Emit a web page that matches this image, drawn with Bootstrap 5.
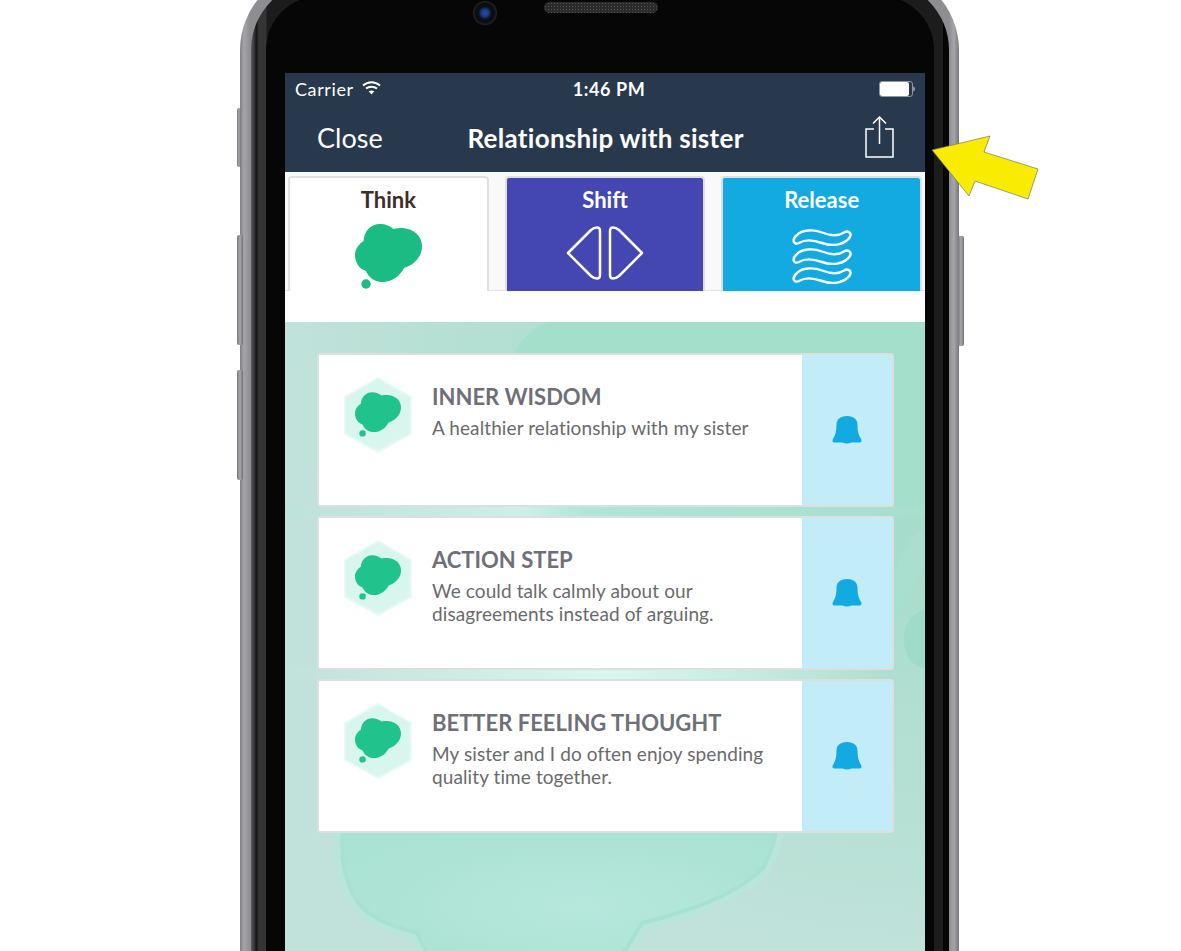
<!DOCTYPE html>
<html lang="en">
<head>
  <meta charset="UTF-8" />
  <title>Relationship with sister</title>
  <link rel="stylesheet" href="https://cdn.jsdelivr.net/npm/bootstrap@5.3.0/dist/css/bootstrap.min.css" />
  <style>
    html, body { height: 951px; overflow: hidden; background: #fff; }
    body { font-family: "Lato", "Liberation Sans", sans-serif; position: relative; }

    /* phone frame */
    .phone-shell {
      width: 719px; height: 981px; margin: -30px 0 0 240px; padding: 11px 10px 0 11px;
      border-radius: 80px 80px 0 0;
      background: linear-gradient(90deg, #7f7f85 0, #a5a5a9 4px, #8e8e92 10px, #8e8e92 calc(100% - 10px), #a6a6aa calc(100% - 5px), #77777c 100%);
    }
    .phone-rim {
      height: 100%; padding: 15px 15px 0 15px; border-radius: 69px 69px 0 0;
      background: linear-gradient(90deg, #5e5e62 0, #101010 6px, #343434 7px, #343434 15px, #1c1c1c 16px, #1c1c1c calc(100% - 6px), #060606 calc(100% - 6px));
    }
    .phone-bezel { height: 100%; padding: 0 9px 0 19px; border-radius: 54px 54px 0 0; background: #060606; }
    .bezel-top { height: 77px; padding-top: 5px; padding-left: 188px; }
    .cam { width: 24px; height: 24px; border-radius: 50%; background: radial-gradient(circle at 50% 50%, #1d4fa8 0, #173a80 22%, #0b0f1c 38%, #0c0c0f 55%, #55565a 100%); }
    .speaker {
      width: 114px; height: 11px; margin-left: 47px; border-radius: 6px; margin-top: 1px;
      background-color: #2b2b2b; background-image: radial-gradient(#505052 35%, transparent 45%); background-size: 3px 3px;
    }
    .side-key { position: absolute; background: linear-gradient(90deg, #77777c, #a9a9ad 50%, #6f6f74); border-radius: 2px; }
    .key-a { left: 237px; top: 108px; width: 4px; height: 59px; }
    .key-b { left: 237px; top: 235px; width: 6px; height: 110px; }
    .key-c { left: 237px; top: 370px; width: 6px; height: 110px; }
    .key-d { left: 958px; top: 236px; width: 6px; height: 110px; }
    .note-arrow { position: absolute; left: 925px; top: 130px; }

    /* header */
    .screen { width: 640px; background: #fff; }
    .app-head { height: 99px; background: #28394d; color: #fff; }
    .status-row { height: 32px; padding: 0 10px; font-size: 18px; letter-spacing: .6px; }
    .status-row > div { flex: 1 1 0; }
    .title-row { height: 67px; padding: 0 31px 0 32px; }
    .title-row > .head-side { flex: 1 1 0; }
    .close-txt { font-size: 27px; font-weight: 400; }
    .title-txt { font-size: 26px; font-weight: 700; letter-spacing: .3px; }

    /* tabs */
    .tab-strip { height: 119px; background: #f9f9f9; border-bottom: 1px solid #e2e2e2; padding: 4px 3px 0 3px; gap: 16px; }
    .tab-item { flex: 1 1 0; margin-bottom: -1px; border: 2px solid #e0e0e0; border-bottom: 0; border-radius: 4px 4px 0 0; text-align: center; color: #fff; font-size: 22px; font-weight: 700; line-height: 1; padding-top: 11px; }
    .tab-think { background: #fff; color: #3b2e28; }
    .tab-shift { background: #4447b1; }
    .tab-release { background: #13a9e1; }
    .tab-item svg { display: block; margin: 0 auto; }
    .tab-think svg { margin-top: 13px; }
    .tab-shift svg { margin-top: 15px; }
    .tab-release svg { margin-top: 18px; }
    .tab-gap { height: 31px; }

    /* content */
    .pane { position: relative; overflow: hidden; padding: 31px 31px 0 32px; background: radial-gradient(circle at 100% 0, #9fdac7 0, #a8ddcc 250px, #c0e2da 640px); }
    .pane-art { position: absolute; left: 0; top: 0; }
    .note-card { position: relative; height: 154px; border: 2px solid #dcdfde; border-radius: 3px; margin-bottom: 9px; background: #fff; }
    .note-main { flex: 1 1 auto; padding: 22px 0 0 25px; }
    .note-main .txt { margin-left: 20px; margin-top: 6px; }
    .note-title { font-size: 22px; font-weight: 700; color: #6f7077; line-height: 27px; margin-bottom: 6px; }
    .note-body { font-size: 19px; color: #6a6a6c; line-height: 23px; letter-spacing: .1px; }
    .note-side { width: 90px; background: #c3ecf9; }
  </style>
</head>
<body>
  <svg width="0" height="0" class="position-absolute">
    <symbol id="thought" viewBox="0 0 67 65">
      <path d="M8.500 17C9 7 16 0 25 0C31 0 35 2 38.500 5C41 4 44 4 48 4C59 5 67 12 67 22C67 33 59 41 49 44C45 52 37 58 27 58C20 58 14 54 11 47C4 45 0 38 0 31C0 25 4 20 8.500 17Z" />
      <circle cx="11" cy="60" r="4.700" />
    </symbol>
    <symbol id="bell" viewBox="0 0 30 30">
      <path d="M15 1C22 1 25.500 4.500 25.500 10C25.500 16 26.500 20 28.800 23.500C30.300 26 29.500 27.500 27 27.500H19.500Q15 29.500 10.500 27.500H3C.5 27.500 -.3 26 1.200 23.500C3.500 20 4.500 16 4.500 10C4.500 4.500 8 1 15 1Z" />
    </symbol>
    <symbol id="wave" viewBox="0 0 60 18">
      <path d="M5 6C10 1 21 0 30 3.500S46 7.500 52 3.500C56 1 60 4 58 8C53 15.500 41 18 30 14S12 11 7 14C2 16.500 -1 11 5 6Z" />
    </symbol>
    <linearGradient id="bandA" x1="0" x2="1" y1="0" y2="0">
      <stop offset="0" stop-color="#bde3d9" />
      <stop offset=".38" stop-color="#caf0e7" />
      <stop offset=".47" stop-color="#aee6d7" />
      <stop offset="1" stop-color="#a6dfcd" />
    </linearGradient>
    <linearGradient id="bandB" x1="0" x2="1" y1="0" y2="0">
      <stop offset="0" stop-color="#d9f7ef" stop-opacity="0" />
      <stop offset=".5" stop-color="#d9f7ef" />
      <stop offset=".95" stop-color="#d9f7ef" stop-opacity="0" />
    </linearGradient>
    <radialGradient id="bigLobe" cx=".55" cy=".6" r=".6">
      <stop offset="0" stop-color="#b6e8dc" />
      <stop offset="1" stop-color="#aae2d3" />
    </radialGradient>
  </svg>

  <div class="side-key key-a"></div>
  <div class="side-key key-b"></div>
  <div class="side-key key-c"></div>
  <div class="side-key key-d"></div>

  <div class="phone-shell">
    <div class="phone-rim">
      <div class="phone-bezel d-flex flex-column">
        <div class="bezel-top d-flex flex-shrink-0">
          <div class="cam"></div>
          <div class="speaker"></div>
        </div>
        <div class="screen d-flex flex-column flex-grow-1">

          <div class="app-head flex-shrink-0">
            <div class="status-row d-flex align-items-center">
              <div class="d-flex align-items-center">
                <span>Carrier</span>
                <svg width="19" height="15" viewBox="0 0 19 15" fill="none" stroke="#fff" stroke-width="2" class="ms-2 mb-1">
                  <path d="M1 5.500C6 1 13 1 18 5.500" />
                  <path d="M4 8.500C7 6 12 6 15 8.500" />
                  <path d="M9.500 14.500L6.700 11.300C8.300 10.200 10.700 10.200 12.300 11.300Z" fill="#fff" stroke="none" />
                </svg>
              </div>
              <div class="text-center fw-bold ps-2">1:46 PM</div>
              <div class="d-flex justify-content-end align-items-center">
                <svg width="36" height="16" viewBox="0 0 36 16">
                  <rect x=".5" y=".5" width="33" height="15" rx="2.500" fill="none" stroke="#8a97a6" />
                  <rect x="1" y="1" width="29" height="14" rx="2" fill="#fff" />
                  <path d="M34.500 5.500C36 6 36 10 34.500 10.500Z" fill="#dfe3e8" />
                </svg>
              </div>
            </div>
            <nav class="title-row d-flex align-items-center">
              <div class="head-side"><span class="close-txt">Close</span></div>
              <span class="title-txt">Relationship with sister</span>
              <div class="head-side d-flex justify-content-end">
                <svg width="29" height="42" viewBox="0 0 29 42" fill="none" stroke="#fff" stroke-width="1.500" class="mb-1">
                  <path d="M9 13H1V41H28V13H20" />
                  <path d="M14.500 28V1M8 7.500L14.500 1L21 7.500" />
                </svg>
              </div>
            </nav>
          </div>

          <div class="tab-strip d-flex flex-shrink-0">
            <div class="tab-item tab-think">
              Think
              <svg width="67" height="65" fill="#1abc84"><use href="#thought" /></svg>
            </div>
            <div class="tab-item tab-shift">
              Shift
              <svg width="78" height="54" viewBox="0 0 78 54" fill="none" stroke="#fff" stroke-width="2.500" stroke-linejoin="round">
                <path d="M2 27L25 4Q28 1.500 31 1.500Q34 1.500 34 5V49Q34 52.500 31 52.500Q28 52.500 25 50Z" />
                <path d="M76 27L53 4Q50 1.500 47 1.500Q44 1.500 44 5V49Q44 52.500 47 52.500Q50 52.500 53 50Z" />
              </svg>
            </div>
            <div class="tab-item tab-release">
              Release
              <svg width="60" height="56" viewBox="0 0 60 56" fill="none" stroke="#fff" stroke-width="2.400">
                <use href="#wave" width="60" height="18" />
                <use href="#wave" y="19" width="60" height="18" />
                <use href="#wave" y="38" width="60" height="18" />
              </svg>
            </div>
          </div>
          <div class="tab-gap flex-shrink-0"></div>

          <div class="pane flex-grow-1">
            <svg class="pane-art" width="640" height="630" viewBox="0 0 640 630">
              <!-- faint shapes behind the cards -->
              <path d="M228 35C235 15 250 5 265 0H640V190H228Z" fill="#a4dfcc" />
              <rect x="0" y="184" width="640" height="11" fill="url(#bandA)" />
              <rect x="0" y="347" width="640" height="11" fill="url(#bandB)" />
              <path d="M640 205C625 215 615 235 609 250V300C620 275 630 255 640 245Z" fill="#a8dfce" />
              <path d="M640 288C612 292 612 342 640 347Z" fill="#9edcc9" />
              <path d="M60 500C55 520 55 550 71 578C85 598 110 605 132 611L146 640H333L357 601C400 590 450 575 479 545C490 520 492 510 490 500Z" fill="#b8e6db" stroke="#b8e6db" stroke-width="16" stroke-linejoin="round" />
              <path d="M60 500C55 520 55 550 71 578C85 598 110 605 132 611L146 640H333L357 601C400 590 450 575 479 545C490 520 492 510 490 500Z" fill="url(#bigLobe)" stroke="#a7e2d1" stroke-width="4" stroke-linejoin="round" />
            </svg>

            <div class="note-card d-flex">
              <div class="note-main d-flex">
                <svg width="68" height="76" viewBox="0 0 68 76" class="flex-shrink-0">
                  <path d="M34 1L67 20V57L34 75L1 57V20Z" fill="#d8f6ee" stroke="#e8faf5" stroke-width="2" />
                  <svg x="11" y="15" width="46" height="45" fill="#20c38c"><use href="#thought" /></svg>
                </svg>
                <div class="txt">
                  <div class="note-title">INNER WISDOM</div>
                  <div class="note-body">A healthier relationship with my sister</div>
                </div>
              </div>
              <div class="note-side d-flex align-items-center justify-content-center">
                <svg width="30" height="30" fill="#13a9e1"><use href="#bell" /></svg>
              </div>
            </div>

            <div class="note-card d-flex">
              <div class="note-main d-flex">
                <svg width="68" height="76" viewBox="0 0 68 76" class="flex-shrink-0">
                  <path d="M34 1L67 20V57L34 75L1 57V20Z" fill="#d8f6ee" stroke="#e8faf5" stroke-width="2" />
                  <svg x="11" y="15" width="46" height="45" fill="#20c38c"><use href="#thought" /></svg>
                </svg>
                <div class="txt">
                  <div class="note-title">ACTION STEP</div>
                  <div class="note-body">We could talk calmly about our<br />disagreements instead of arguing.</div>
                </div>
              </div>
              <div class="note-side d-flex align-items-center justify-content-center">
                <svg width="30" height="30" fill="#13a9e1"><use href="#bell" /></svg>
              </div>
            </div>

            <div class="note-card d-flex">
              <div class="note-main d-flex">
                <svg width="68" height="76" viewBox="0 0 68 76" class="flex-shrink-0">
                  <path d="M34 1L67 20V57L34 75L1 57V20Z" fill="#d8f6ee" stroke="#e8faf5" stroke-width="2" />
                  <svg x="11" y="15" width="46" height="45" fill="#20c38c"><use href="#thought" /></svg>
                </svg>
                <div class="txt">
                  <div class="note-title">BETTER FEELING THOUGHT</div>
                  <div class="note-body">My sister and I do often enjoy spending<br />quality time together.</div>
                </div>
              </div>
              <div class="note-side d-flex align-items-center justify-content-center">
                <svg width="30" height="30" fill="#13a9e1"><use href="#bell" /></svg>
              </div>
            </div>
          </div>

        </div>
      </div>
    </div>
  </div>

  <svg class="note-arrow" width="120" height="75" viewBox="925 130 120 75">
    <path d="M932 150L990 136L984 152L1038 169L1028 199L975 181L969 196Z" fill="#f9ec00" stroke="#77776a" stroke-width=".7" />
  </svg>

  <script src="https://cdn.jsdelivr.net/npm/bootstrap@5.3.0/dist/js/bootstrap.bundle.min.js"></script>
</body>
</html>
